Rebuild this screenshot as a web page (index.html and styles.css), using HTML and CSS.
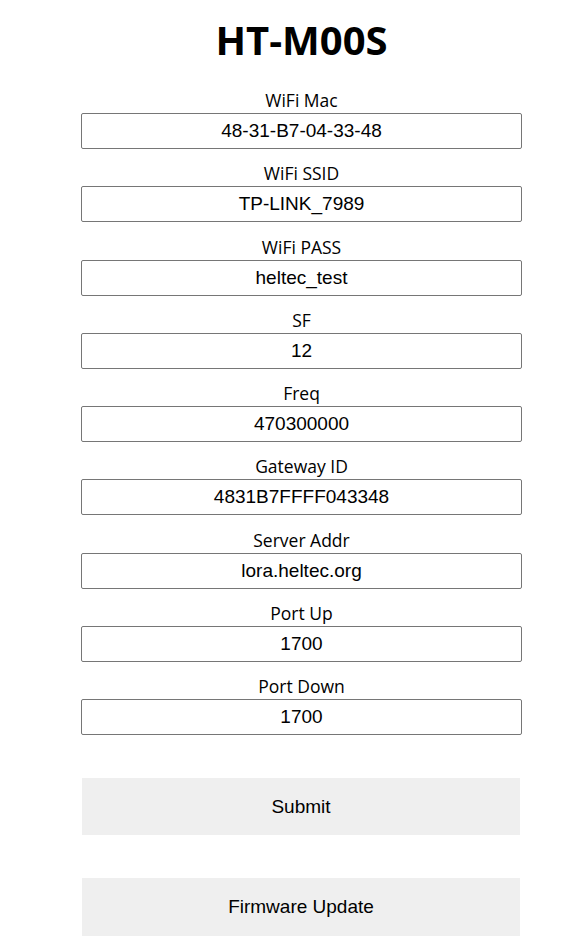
FILE: index.html
```html
<!DOCTYPE html>
<html>
<head>
<meta charset="utf-8">
<link rel="stylesheet" href="styles.css">
</head>
<body>
<main class="page">
  <h1 class="title">HT-M00S</h1>
  <form class="form">
    <label class="field"><span class="label">WiFi Mac</span><input class="input" value="48-31-B7-04-33-48"></label>
    <label class="field"><span class="label">WiFi SSID</span><input class="input" value="TP-LINK_7989"></label>
    <label class="field"><span class="label">WiFi PASS</span><input class="input" value="heltec_test"></label>
    <label class="field"><span class="label">SF</span><input class="input" value="12"></label>
    <label class="field"><span class="label">Freq</span><input class="input" value="470300000"></label>
    <label class="field"><span class="label">Gateway ID</span><input class="input" value="4831B7FFFF043348"></label>
    <label class="field"><span class="label">Server Addr</span><input class="input" value="lora.heltec.org"></label>
    <label class="field"><span class="label">Port Up</span><input class="input" value="1700"></label>
    <label class="field"><span class="label">Port Down</span><input class="input" value="1700"></label>
    <button type="button" class="btn btn-submit">Submit</button>
    <button type="button" class="btn btn-fw">Firmware Update</button>
  </form>
</main>
</body>
</html>
```
FILE: styles.css
```css
html, body {
  margin: 0;
  padding: 0;
  background: #fff;
}
.page {
  width: 441px;
  margin-left: 81px;
  text-align: center;
  font-family: "Open Sans", "Noto Sans", sans-serif;
  color: #000;
}
.title {
  margin: 0;
  padding-top: 14px;
  height: 88px;
  box-sizing: border-box;
  font-size: 40px;
  line-height: 52px;
  font-weight: 700;
  letter-spacing: 0;
}
.form {
  display: flex;
  flex-direction: column;
}
.field {
  display: flex;
  flex-direction: column;
  height: 73.25px;
}
.label {
  font-size: 17.5px;
  line-height: 25px;
  height: 25px;
  margin: 0;
}
.input {
  box-sizing: border-box;
  width: 441px;
  height: 36px;
  margin: 0;
  border: 1px solid #767676;
  border-radius: 2px;
  padding: 0 4px;
  font-family: "Liberation Sans", Arial, sans-serif;
  font-size: 19px;
  text-align: center;
  color: #000;
  background: #fff;
}
.btn {
  box-sizing: border-box;
  width: 438px;
  margin-left: 1px;
  height: 57px;
  border: none;
  background: #efefef;
  font-family: "Liberation Sans", Arial, sans-serif;
  font-size: 19px;
  color: #000;
  padding: 0;
}
.btn-submit {
  margin-top: 31px;
}
.btn-fw {
  margin-top: 43px;
  height: 58px;
}
```
